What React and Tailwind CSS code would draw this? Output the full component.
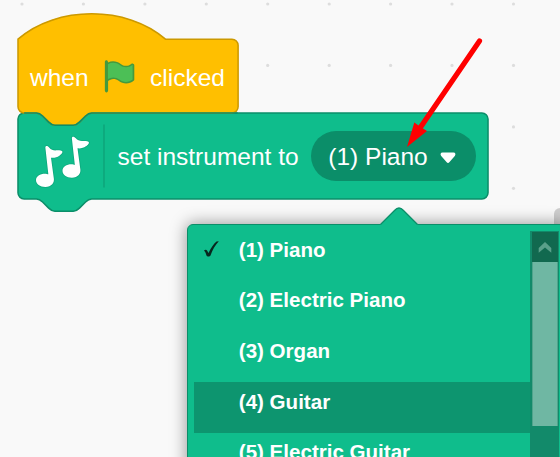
const NOTE =
  'M136,142 C137,136 144,138 148,143 C153,150 162,152 170,151 C177,151 182,150 186,153 C190,157 184,163 178,167 C171,172 163,174 153,173 L161,232 C165,249 154,261 136,261 C120,261 108,252 108,240 C108,229 120,221 135,221 C139,221 143,222 145,223 Z';

const DOT_COLUMNS = [22, 83.4, 144.9, 206.3, 267.7, 329.2, 390.6, 452, 513.5];
const DOT_ROWS = [4, 65.4, 126.9, 188.3];
const INSTRUMENTS = ['(1) Piano', '(2) Electric Piano', '(3) Organ', '(4) Guitar', '(5) Electric Guitar'];

function Flag() {
  return (
    <svg className="ml-[12.5px] mr-[12px] size-[37px] shrink-0" viewBox="0 0 24 24">
      <path fill="#45993d" d="M20.8,3.7c-0.4-0.2-0.9-0.1-1.2,0.2c-2,1.6-4.8,1.6-6.8,0c-2.3-1.9-5.6-2.3-8.3-1v-0.4c0-0.6-0.5-1-1-1s-1,0.4-1,1v18.8c0,0.5,0.5,1,1,1h0.1c0.5,0,1-0.5,1-1v-6.4c1-0.7,2.1-1.2,3.4-1.3c1.2,0,2.4,0.4,3.4,1.2c2.9,2.3,7,2.3,9.8,0c0.3-0.2,0.4-0.5,0.4-0.9V4.7C21.6,4.2,21.3,3.8,20.8,3.7z" />
      <path fill="#4cbf56" d="M20.5,13.9C18,16,14.4,16,11.9,14c-1.1-0.9-2.5-1.4-4-1.4c-1.2,0.1-2.3,0.5-3.4,1.1V4c2.5-1.4,5.5-1.1,7.7,0.6c2.4,1.9,5.7,1.9,8.1,0h0.2V13.9z" />
    </svg>
  );
}

function Canvas() {
  return (
    <svg className="absolute inset-0" width="560" height="457">
      {DOT_ROWS.map((y) =>
        DOT_COLUMNS.map((x) => <circle key={`${x}-${y}`} cx={x} cy={y} r="1.6" fill="#dddddd" />)
      )}
      <g transform="translate(18 112.9) scale(1.536)">
        <path
          fill="#0fbd8c"
          stroke="#0b8e69"
          d="M0,4 A4,4 0 0,1 4,0 H12 c2,0 3,1 4,2 l4,4 c1,1 2,2 4,2 h12 c2,0 3,-1 4,-2 l4,-4 c1,-1 2,-2 4,-2 H302 a4,4 0 0,1 4,4 V52 a4,4 0 0,1 -4,4 H48 c-2,0 -3,1 -4,2 l-4,4 c-1,1 -2,2 -4,2 h-12 c-2,0 -3,-1 -4,-2 l-4,-4 c-1,-1 -2,-2 -4,-2 H4 a4,4 0 0,1 -4,-4 z"
        />
      </g>
      <g transform="translate(18 39.2) scale(1.536)">
        <path
          fill="#ffbf00"
          stroke="#cc9900"
          d="M0,0 c25,-22 71,-22 96,0 H139.3 a4,4 0 0,1 4,4 V44 a4,4 0 0,1 -4,4 H48 c-2,0 -3,1 -4,2 l-4,4 c-1,1 -2,2 -4,2 h-12 c-2,0 -3,-1 -4,-2 l-4,-4 c-1,-1 -2,-2 -4,-2 H4 a4,4 0 0,1 -4,-4 z"
        />
        <path
          fill="none"
          stroke="#0b8e69"
          d="M4,48 H12 c2,0 3,1 4,2 l4,4 c1,1 2,2 4,2 h12 c2,0 3,-1 4,-2 l4,-4 c1,-1 2,-2 4,-2 H143"
        />
      </g>
      <g transform="translate(0 100) scale(0.33333)" fill="#fff" stroke="#0b8e69" strokeOpacity="0.4" strokeWidth="5" paintOrder="stroke">
        <path d={NOTE} />
        <path d={NOTE} transform="translate(79.5 -28)" />
      </g>
      <path d="M104,124.5 V187.5" stroke="#0da67b" strokeWidth="1.6" />
    </svg>
  );
}

function Menu() {
  return (
    <div className="absolute left-[187px] top-[224px] h-[300px] w-[380px] rounded-md border border-[#0b8e69] bg-[#0fbd8c] pt-[5.5px] shadow-[0_0_16px_1px_rgba(0,0,0,0.38)]">
      <div className="flex h-[290px] pl-[6px]">
        <ul className="w-[336px] text-[20.55px] font-bold leading-[24px] text-white">
          {INSTRUMENTS.map((name) => (
            <li
              key={name}
              className={
                name === '(4) Guitar'
                  ? 'flex h-[50.6px] bg-[#0d956f] pl-[10.5px] pt-[7.4px]'
                  : 'flex h-[50.6px] pl-[10.5px] pt-[7.4px]'
              }
            >
              <span className="w-[34.3px] shrink-0">
                {name === '(1) Piano' && (
                  <svg className="-ml-px mt-[3.5px]" width="15" height="17" viewBox="0 0 15 17">
                    <path fill="#07281e" d="M0,9.5 C1.2,8.4 2.6,8.5 3.2,9.8 L4.5,12 C7,7 9.6,3 12.5,.6 L14.8,.3 C11,4.5 8.5,9 6.5,14.5 C5.7,15.8 3.2,16 2.5,14.5 C1.9,12.3 1.2,10.6 0,9.5 Z" />
                  </svg>
                )}
              </span>
              <span className="whitespace-nowrap">{name}</span>
            </li>
          ))}
        </ul>
        <div className="flex w-[29px] flex-col bg-[#128a6a] px-[1.5px] pt-[1px]">
          <div className="flex h-[30px] justify-center bg-[#11694f] pt-[10px]">
            <svg width="14" height="11" viewBox="0 0 14 11">
              <path fill="#5aa08a" d="M7,0 L13.3,6 V10.8 L7,5.5 L.7,10.8 V6 Z" />
            </svg>
          </div>
          <div className="h-[164px] border-x border-[#4fa48c] bg-[#6fb7a3]" />
        </div>
      </div>
    </div>
  );
}

export default function App() {
  return (
    <main className="relative h-[457px] w-[560px] overflow-hidden bg-[#f9f9f9] font-['Liberation_Sans',Arial,sans-serif]">
      <Canvas />
      <div className="absolute left-[30px] top-[58px] flex h-[37px] items-center text-[24.5px] text-white">
        <span className="pt-[3px]">when</span>
        <Flag />
        <span className="pt-[3px]">clicked</span>
      </div>
      <div className="absolute left-[117.5px] top-[131px] flex h-[50px] items-center whitespace-nowrap text-[24.5px] text-white">
        <span className="w-[193.3px] pt-[2px]">set instrument to</span>
        <div className="flex h-full w-[165px] items-center rounded-full bg-[#0b8e69] pl-[17.5px]">
          <span className="w-[112px] pt-[2px]">(1) Piano</span>
          <svg className="mt-[3px]" width="16" height="12" viewBox="0 0 16 12">
            <path fill="#fff" d="M2.5,.5 H13.5 C15.5,.5 16,2.5 14.8,4 L9.5,10 C8.5,11.2 7.5,11.2 6.5,10 L1.2,4 C0,2.5 .5,.5 2.5,.5 Z" />
          </svg>
        </div>
      </div>
      <div className="absolute left-[554px] top-[208px] h-[40px] w-[20px] rounded-md bg-[#cecece]" />
      <Menu />
      <svg className="absolute inset-0" width="560" height="457">
        <path fill="#0fbd8c" d="M379,226 L394.5,210.5 Q399,205.5 403.5,210.5 L419,226 Z" />
        <path fill="none" stroke="#0b8e69" strokeWidth="1.3" d="M380.5,224.5 L394.5,210.5 Q399,205.5 403.5,210.5 L417.5,224.5" />
        <path d="M479.5,41 L420,128" stroke="#f00" strokeWidth="5.2" strokeLinecap="round" />
        <path fill="#f00" d="M407,147 L414.3,122.6 L420,126.5 L427,130.9 Z" />
      </svg>
    </main>
  );
}
